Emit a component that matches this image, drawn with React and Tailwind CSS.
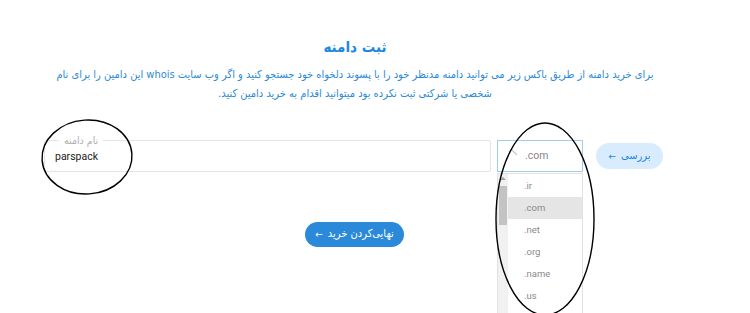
import React from 'react';

const fa = { fontFamily: '"DejaVu Sans Condensed", "DejaVu Sans", sans-serif' };
const latin = { fontFamily: 'Roboto, "Noto Sans", sans-serif' };

const tlds = ['.ir', '.com', '.net', '.org', '.name', '.us'];

export default function App() {
  return (
    <div className="relative w-[750px] h-[313px] overflow-hidden bg-white">
      {/* Heading */}
      <div className="pt-[37px] pr-[40px] text-center" dir="rtl">
        <h1 className="text-[15px] font-bold text-[#1e88e5] leading-[20px]" style={fa}>ثبت دامنه</h1>
        <p className="mt-[8px] text-[11px] leading-[19px] text-[#2b8ad8]" style={fa}>
          برای خرید دامنه از طریق باکس زیر می توانید دامنه مدنظر خود را با پسوند دلخواه خود جستجو کنید و اگر وب سایت whois این دامین را برای نام
          <br />
          شخصی یا شرکتی ثبت نکرده بود میتوانید اقدام به خرید دامین کنید.
        </p>
      </div>

      {/* Form row */}
      <div className="flex items-center pl-[44px] mt-[37px]">
        <div className="relative w-[447px] h-[32px] border border-[#e4e4e4] rounded-[2px]">
          <span className="absolute left-[14px] -top-[8px] bg-white px-[5px] text-[10.5px] leading-[14px] text-[#b0b0b0]" style={fa}>نام دامنه</span>
          <div className="pl-[10px] pt-[9px] text-[10.5px] leading-[14px] text-[#222]" style={latin}>parspack</div>
        </div>

        <div className="relative ml-[6px] w-[86px] h-[32px] border border-[#9fcdf2]">
          <span className="absolute left-[13px] top-[11px] w-[7px] h-px bg-[#bbb] rotate-45" />
          <span className="absolute left-[27px] top-[8px] text-[10.5px] leading-[14px] text-[#888]" style={latin}>.com</span>

          {/* Dropdown */}
          <div className="absolute left-[-1px] top-[32px] w-[86px] h-[150px] border border-[#e2e2e2] bg-white flex">
            <div className="w-[10px] bg-[#f1f1f1] flex flex-col items-center">
              <span className="mt-[3px] w-0 h-0 border-l-[3px] border-r-[3px] border-b-[3px] border-l-transparent border-r-transparent border-b-[#a3a3a3]" />
              <span className="mt-[6px] w-[8px] h-[39px] bg-[#c3c3c3]" />
            </div>
            <div className="flex-1 pt-[1px]">
              {tlds.map((t, i) => (
                <div
                  key={t}
                  className={`h-[22px] pl-[16px] flex items-center text-[9.5px] text-[#8a8a8a] ${i === 1 ? 'bg-[#e5e5e5]' : ''}`}
                  style={latin}
                >
                  {t}
                </div>
              ))}
            </div>
          </div>
        </div>

        <button
          dir="rtl"
          className="ml-[13px] w-[67px] h-[26px] rounded-full bg-[#d8ecfd] text-[#1e88e5] text-[11px] flex items-center justify-center gap-[5px]"
          style={fa}
        >
          <span>بررسی</span>
          <span className="text-[10px]">←</span>
        </button>
      </div>

      {/* Finalize */}
      <div className="flex justify-center pr-[41px] mt-[50px]">
        <button
          dir="rtl"
          className="w-[99px] h-[25px] rounded-full bg-[#2a8ad9] text-white text-[11px] flex items-center justify-center gap-[5px]"
          style={fa}
        >
          <span>نهایی‌کردن خرید</span>
          <span className="text-[10px]">←</span>
        </button>
      </div>

      {/* Hand-drawn annotations */}
      <svg className="absolute inset-0 pointer-events-none" width="750" height="313" viewBox="0 0 750 313">
        <ellipse cx="87" cy="157" rx="45" ry="37" fill="none" stroke="#000" strokeWidth="1.4" transform="rotate(-4 87 157)" />
        <ellipse cx="545" cy="219" rx="49" ry="96" fill="none" stroke="#000" strokeWidth="1.4" />
      </svg>
    </div>
  );
}
